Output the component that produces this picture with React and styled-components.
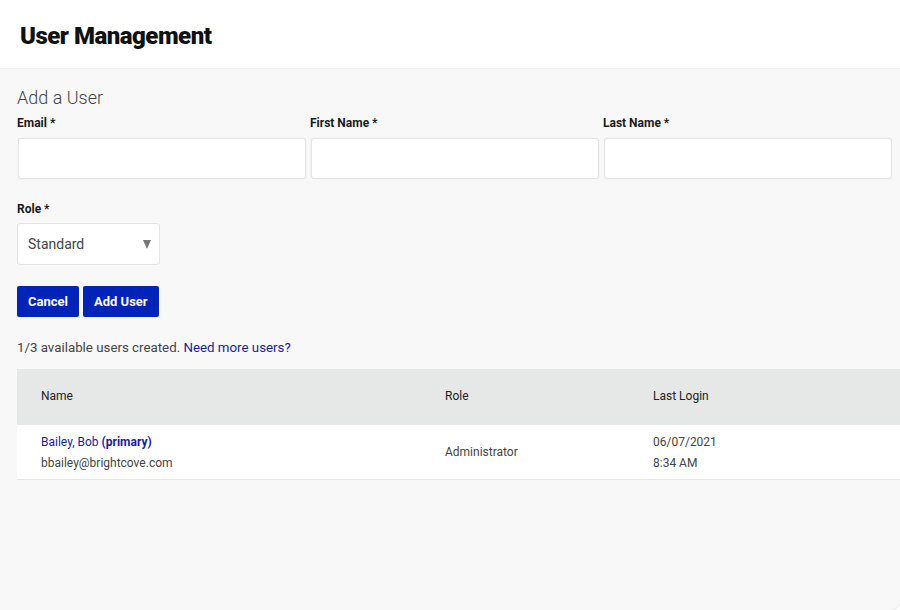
import React from "react";
import styled, { createGlobalStyle } from "styled-components";

const GlobalStyle = createGlobalStyle`
  html, body {
    margin: 0;
    padding: 0;
    background: #ffffff;
    font-family: Roboto, "Noto Sans", sans-serif;
    color: #222;
  }
  * { box-sizing: border-box; }
`;

const users = [
  {
    name: "Bailey, Bob",
    primary: true,
    email: "bbailey@brightcove.com",
    role: "Administrator",
    date: "06/07/2021",
    time: "8:34 AM",
  },
];

function App() {
  return (
    <Page>
      <GlobalStyle />
      <Header>
        <Title>User Management</Title>
      </Header>
      <Panel>
        <SectionTitle>Add a User</SectionTitle>
        <FieldGrid>
          <Field>
            <Label>Email *</Label>
            <TextInput type="text" />
          </Field>
          <Field>
            <Label>First Name *</Label>
            <TextInput type="text" />
          </Field>
          <Field>
            <Label>Last Name *</Label>
            <TextInput type="text" />
          </Field>
        </FieldGrid>
        <RoleField>
          <Label $gap={6}>Role *</Label>
          <SelectBox>
            <span>Standard</span>
            <Caret />
          </SelectBox>
        </RoleField>
        <Buttons>
          <Button>Cancel</Button>
          <Button>Add User</Button>
        </Buttons>
        <Quota>
          1/3 available users created. <Link href="#">Need more users?</Link>
        </Quota>
        <Table>
          <HeadRow>
            <HeadCell>Name</HeadCell>
            <HeadCell>Role</HeadCell>
            <HeadCell>Last Login</HeadCell>
          </HeadRow>
          {users.map((u) => (
            <Row key={u.email}>
              <Cell>
                <UserName>
                  {u.name} {u.primary && <b>(primary)</b>}
                </UserName>
                <span>{u.email}</span>
              </Cell>
              <Cell>{u.role}</Cell>
              <Cell>
                <span>{u.date}</span>
                <span>{u.time}</span>
              </Cell>
            </Row>
          ))}
        </Table>
      </Panel>
    </Page>
  );
}

const Page = styled.div`
  display: flex;
  flex-direction: column;
  height: 610px;
  overflow: hidden;
`;

const Header = styled.header`
  height: 69px;
  display: flex;
  align-items: center;
  padding: 3px 0 0 20px;
  border-bottom: 1px solid #f0f0f0;
`;

const Title = styled.h1`
  margin: 0;
  font-size: 24px;
  font-weight: 900;
  letter-spacing: -0.5px;
  color: #111;
`;

const Panel = styled.main`
  flex: 1;
  background: #f8f8f8;
  padding: 18px 0 0 17px;
  border-bottom-right-radius: 10px;
  box-shadow: 0 1px 2px rgba(0, 0, 0, 0.12);
`;

const SectionTitle = styled.h2`
  margin: 0 0 6px;
  font-size: 18px;
  line-height: 22px;
  font-weight: 300;
  color: #444;
`;

const FieldGrid = styled.div`
  display: grid;
  grid-template-columns: repeat(3, 1fr);
  gap: 4px;
  width: 875px;
`;

const Field = styled.div`
  display: flex;
  flex-direction: column;
`;

const Label = styled.label`
  font-size: 12px;
  line-height: 16px;
  font-weight: 700;
  color: #1a1a1a;
  margin-bottom: ${(p) => p.$gap ?? 7}px;
`;

const TextInput = styled.input`
  height: 41px;
  margin-left: 1px;
  border: 1px solid #e4e4e4;
  border-radius: 3px;
  background: #fff;
  box-shadow: 0 0 2px rgba(0, 0, 0, 0.06);
  outline: none;
`;

const RoleField = styled(Field)`
  margin-top: 22px;
`;

const SelectBox = styled.div`
  width: 143px;
  height: 42px;
  display: flex;
  align-items: center;
  justify-content: space-between;
  padding: 0 8px 0 10px;
  border: 1px solid #e4e4e4;
  border-radius: 3px;
  background: #fff;
  font-size: 14px;
  color: #444;
`;

const Caret = styled.span`
  width: 0;
  height: 0;
  border-left: 4px solid transparent;
  border-right: 4px solid transparent;
  border-top: 9px solid #777;
`;

const Buttons = styled.div`
  display: flex;
  gap: 4px;
  margin-top: 21px;
`;

const Button = styled.button`
  height: 31px;
  padding: 0 11px;
  border: none;
  border-radius: 2px;
  background: #0023b8;
  color: #fff;
  font-family: inherit;
  font-size: 13px;
  font-weight: 700;
`;

const Quota = styled.p`
  margin: 21px 0 11px;
  font-size: 13.3px;
  line-height: 20px;
  color: #444;
`;

const Link = styled.a`
  color: #1c1c99;
  text-decoration: none;
`;

const Table = styled.div`
  display: flex;
  flex-direction: column;
`;

const columns = "404px 208px 1fr";

const HeadRow = styled.div`
  display: grid;
  grid-template-columns: ${columns};
  height: 56px;
  align-items: center;
  padding-bottom: 2px;
  background: #e6e7e7;
`;

const HeadCell = styled.div`
  padding-left: 24px;
  font-size: 12px;
  color: #222;
`;

const Row = styled.div`
  display: grid;
  grid-template-columns: ${columns};
  align-items: center;
  height: 55px;
  background: #fff;
  border-bottom: 1px solid #e6e6e6;
`;

const Cell = styled.div`
  display: flex;
  flex-direction: column;
  gap: 1px;
  padding-left: 24px;
  font-size: 12px;
  line-height: 20px;
  color: #444;
`;

const UserName = styled.span`
  color: #1c1c99;
  b {
    font-weight: 700;
  }
`;

export default App;
